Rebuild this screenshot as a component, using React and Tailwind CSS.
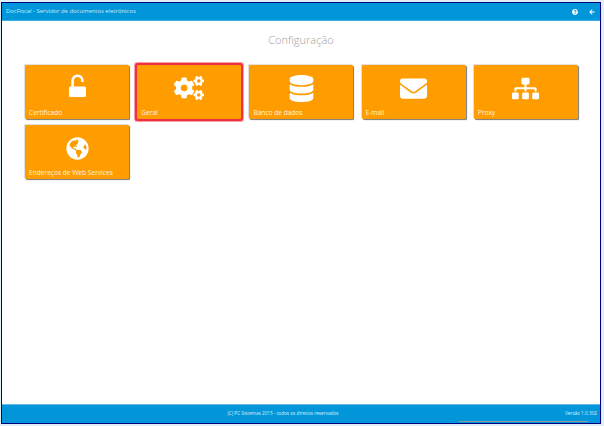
import { FaCogs, FaDatabase, FaEnvelope, FaSitemap, FaGlobeAmericas, FaQuestionCircle, FaArrowLeft } from 'react-icons/fa'

function OpenLock() {
  return (
    <svg className="mb-[5px]" width="17" height="23" viewBox="0 0 17 23" fill="none">
      <path d="M3.6 14V6.6a4.9 4.9 0 0 1 9.8 0V8" stroke="#fff" strokeWidth="2.6" />
      <rect x="0" y="12.5" width="17" height="10.5" rx="1.5" fill="#fff" />
    </svg>
  )
}

const tiles = [
  { label: 'Certificado', icon: OpenLock },
  { label: 'Geral', icon: FaCogs, size: 30, active: true },
  { label: 'Banco de dados', icon: FaDatabase, size: 27 },
  { label: 'E-mail', icon: FaEnvelope, size: 27 },
  { label: 'Proxy', icon: FaSitemap, size: 27 },
  { label: 'Endereços de Web Services', icon: FaGlobeAmericas, size: 23 },
]

function Tile({ label, icon: Icon, size, active }) {
  return (
    <div className={`flex h-[54px] w-[104px] flex-col justify-between rounded-[1px] bg-[#ff9c00] pb-[1px] ${active ? 'shadow-[0_0_0_2px_#ee3040,0_0_0_3px_#f8a0a8]' : 'shadow-[1px_1px_1px_#777,-1px_-1px_1px_#ddd]'}`}>
      <div className="flex h-[41px] items-center justify-center pt-[5px] text-white">
        <Icon size={size} />
      </div>
      <div className="truncate pl-[4px] text-[6.6px] leading-[10px] text-[#fff3dd]">{label}</div>
    </div>
  )
}

export default function App() {
  return (
    <div className="relative h-[426px] w-[604px] bg-[#e0eff6] pl-[1px] pr-[3px] pt-[2px] font-['Open_Sans',sans-serif]">
      <div className="flex h-[422px] flex-col border border-[#000080] bg-white">
        <div className="flex h-[18px] items-center justify-between border-b border-[#3aaee3] bg-[#0096d9] pl-[4px] pr-[5px] text-[5.9px] text-[#cfeaf8]">
          <span>DocFiscal - Servidor de documentos eletrônicos</span>
          <div className="flex items-center gap-[11px] text-white">
            <FaQuestionCircle size={6} />
            <FaArrowLeft size={6} />
          </div>
        </div>
        <div className="flex-1">
          <h1 className="mt-[11px] text-center text-[11px] font-light leading-[16px] text-[#a0a0a0]">Configuração</h1>
          <div className="ml-[23px] mt-[17px] flex w-[565px] flex-wrap gap-x-[8.2px] gap-y-[6px]">
            {tiles.map((t) => <Tile key={t.label} {...t} />)}
          </div>
        </div>
        <div className="flex h-[19px] items-center border-t border-[#66bce6] bg-[#0096d9] pl-[4px] pr-[3px] text-[4.7px] text-[#dff1fa]">
          <span className="flex-1 pr-[5px] text-center">(C) PC Sistemas 2015 - todos os direitos reservados</span>
          <span>Versão 1.0.302</span>
        </div>
      </div>
      <div className="absolute bottom-[4px] left-[459px] h-[1px] w-[129px] bg-[#999999]" />
    </div>
  )
}
